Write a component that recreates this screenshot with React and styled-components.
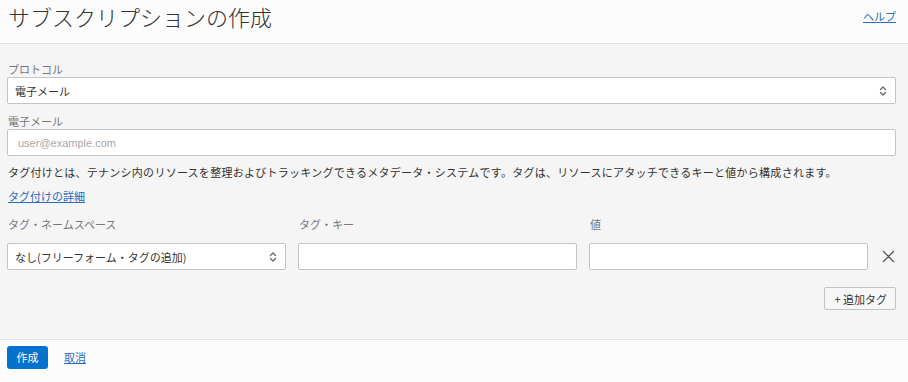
import React from "react";
import styled, { createGlobalStyle } from "styled-components";

const Global = createGlobalStyle`
  html, body { margin: 0; padding: 0; }
  body {
    background: #f5f5f5;
    font-family: "Liberation Sans", "Noto Sans CJK JP", sans-serif;
    color: #333;
  }
  * { box-sizing: border-box; }
`;

const Page = styled.div`
  width: 908px;
  height: 382px;
  display: flex;
  flex-direction: column;
  overflow: hidden;
`;

const Header = styled.header`
  height: 44px;
  flex: none;
  background: #fcfcfc;
  border-bottom: 1px solid #e2e2e2;
  display: flex;
  align-items: flex-start;
  justify-content: space-between;
  padding: 2px 12px 0 8px;
`;

const Title = styled.h1`
  margin: 0;
  font-family: "Noto Sans CJK JP", sans-serif;
  font-weight: 300;
  font-size: 22px;
  line-height: 28px;
  color: #333;
`;

const Link = styled.a`
  font-family: "Noto Sans CJK JP", sans-serif;
  font-size: 11px;
  color: #2a6cbd;
  text-decoration: underline;
  cursor: pointer;
  line-height: 16px;
`;

const HelpLink = styled(Link)`
  margin-top: 6px;
`;

const Body = styled.main`
  height: 296px;
  flex: none;
  background: #f5f5f5;
  border-bottom: 1px solid #e2e2e2;
  padding: 17px 12px 0 7px;
  display: flex;
  flex-direction: column;
`;

const Field = styled.div`
  display: flex;
  flex-direction: column;
  margin-bottom: ${(p) => p.$mb || 0}px;
`;

const Label = styled.label`
  font-family: "Noto Sans CJK JP", sans-serif;
  font-size: 11px;
  line-height: 16px;
  color: #777;
  padding-left: 1px;
`;

const BoxBase = styled.div`
  height: 27px;
  background: #fff;
  border: 1px solid #c4c4c4;
  border-radius: 2px;
  display: flex;
  align-items: center;
  padding: 0 8px 0 7px;
  font-family: "Noto Sans CJK JP", sans-serif;
  font-size: 11px;
  color: #333;
`;

const SelectBox = styled(BoxBase)`
  justify-content: space-between;
`;

const Placeholder = styled.span`
  font-family: "Liberation Sans", sans-serif;
  font-size: 11px;
  color: #a8a8a8;
  padding-left: 3px;
`;

const Para = styled.p`
  margin: 8px 0 0 1px;
  font-family: "Noto Sans CJK JP", sans-serif;
  font-size: 11px;
  line-height: 16px;
  color: #333;
  letter-spacing: 0.26px;
`;

const DetailLink = styled(Link)`
  margin: 8px 0 0 1px;
  align-self: flex-start;
`;

const TagGrid = styled.div`
  display: grid;
  grid-template-columns: 1fr 1fr 1fr 16px;
  column-gap: 12px;
  align-items: center;
`;

const TagLabels = styled(TagGrid)`
  margin-top: 10px;
  height: 20px;
  margin-bottom: 9px;
`;

const Remove = styled.button`
  border: none;
  background: none;
  padding: 0;
  display: flex;
  align-items: center;
  justify-content: center;
  cursor: pointer;
`;

const Actions = styled.div`
  display: flex;
  justify-content: flex-end;
  margin-top: 17px;
`;

const SecondaryButton = styled.button`
  height: 23px;
  padding: 0 8px 0 9px;
  background: #f7f7f7;
  border: 1px solid #c4c4c4;
  border-radius: 2px;
  font-family: "Noto Sans CJK JP", sans-serif;
  font-size: 11px;
  color: #333;
  cursor: pointer;
`;

const Footer = styled.footer`
  flex: 1;
  background: #fcfcfc;
  display: flex;
  align-items: center;
  gap: 16px;
  padding: 0 7px 8px;
`;

const PrimaryButton = styled.button`
  height: 23px;
  width: 41px;
  background: #0572ce;
  border: none;
  border-radius: 3px;
  color: #fff;
  font-family: "Noto Sans CJK JP", sans-serif;
  font-size: 11px;
  cursor: pointer;
`;

const Chevron = () => (
  <svg width="8" height="12" viewBox="0 0 8 12" fill="none" stroke="#666" strokeWidth="1.3" strokeLinecap="round" strokeLinejoin="round">
    <path d="M1.5 4.5 L4 2 L6.5 4.5" />
    <path d="M1.5 7.5 L4 10 L6.5 7.5" />
  </svg>
);

const CloseIcon = () => (
  <svg width="13" height="13" viewBox="0 0 13 13" stroke="#555" strokeWidth="1.3" strokeLinecap="round">
    <path d="M1.5 1.5 L11.5 11.5 M11.5 1.5 L1.5 11.5" />
  </svg>
);

export default function App() {
  return (
    <Page>
      <Global />
      <Header>
        <Title>サブスクリプションの作成</Title>
        <HelpLink>ヘルプ</HelpLink>
      </Header>
      <Body>
        <Field $mb={9}>
          <Label>プロトコル</Label>
          <SelectBox>
            <span>電子メール</span>
            <Chevron />
          </SelectBox>
        </Field>
        <Field>
          <Label>電子メール</Label>
          <BoxBase>
            <Placeholder>user@example.com</Placeholder>
          </BoxBase>
        </Field>
        <Para>
          タグ付けとは、テナンシ内のリソースを整理およびトラッキングできるメタデータ・システムです。タグは、リソースにアタッチできるキーと値から構成されます。
        </Para>
        <DetailLink>タグ付けの詳細</DetailLink>
        <TagLabels>
          <Label>タグ・ネームスペース</Label>
          <Label>タグ・キー</Label>
          <Label>値</Label>
          <span />
        </TagLabels>
        <TagGrid>
          <SelectBox>
            <span>なし(フリーフォーム・タグの追加)</span>
            <Chevron />
          </SelectBox>
          <BoxBase />
          <BoxBase />
          <Remove aria-label="削除">
            <CloseIcon />
          </Remove>
        </TagGrid>
        <Actions>
          <SecondaryButton>+ 追加タグ</SecondaryButton>
        </Actions>
      </Body>
      <Footer>
        <PrimaryButton>作成</PrimaryButton>
        <Link>取消</Link>
      </Footer>
    </Page>
  );
}
